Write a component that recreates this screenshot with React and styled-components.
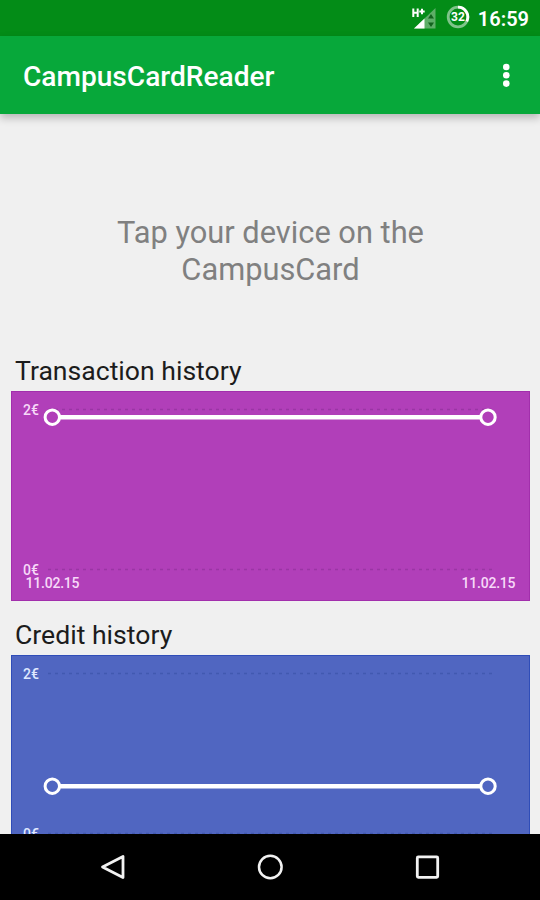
import styled, { createGlobalStyle } from "styled-components";

const GlobalStyle = createGlobalStyle`
  * {
    box-sizing: border-box;
  }

  body {
    margin: 0;
    background: #f0f0f0;
    font-family: Roboto, sans-serif;
  }
`;

const Screen = styled.div`
  display: flex;
  flex-direction: column;
  width: 540px;
  height: 900px;
  overflow: hidden;
  background: #f0f0f0;
`;

const StatusBar = styled.div`
  display: flex;
  flex: none;
  align-items: center;
  justify-content: flex-end;
  height: 36px;
  padding-right: 11px;
  background: #038c17;
`;

const SignalIcon = styled.svg`
  margin-right: 10px;
`;

const BatteryIcon = styled.svg`
  margin: 0 7.5px 2px 0;
`;

const Clock = styled.span`
  padding-top: 2px;
  font-size: 20px;
  font-weight: 600;
  line-height: 24px;
  color: #ffffff;
`;

const Header = styled.header`
  display: flex;
  flex: none;
  align-items: center;
  justify-content: space-between;
  height: 78px;
  padding: 3px 22px 0 23px;
  background: #07a83a;
  box-shadow: 0 4px 8px rgba(0, 0, 0, 0.24);
`;

const AppName = styled.h1`
  margin: 0;
  font-size: 28.1px;
  font-weight: 500;
  line-height: 32px;
  color: #ffffff;
`;

const MenuButton = styled.button`
  display: flex;
  padding: 0;
  border: 0;
  background: none;
`;

const Content = styled.main`
  flex: 1;
  min-height: 0;
  padding: 0 10px 0 11px;
  overflow: hidden;
`;

const Hint = styled.p`
  width: 330px;
  height: 235px;
  margin: 0 auto;
  padding-top: 100px;
  font-size: 30.8px;
  line-height: 37px;
  text-align: center;
  color: #808080;
`;

const SectionTitle = styled.h2`
  height: ${({ $height }) => $height}px;
  margin: 0;
  padding: ${({ $top }) => $top}px 0 0 4px;
  font-size: 26.6px;
  font-weight: 400;
  line-height: 32px;
  color: #1c1c1c;
`;

const ChartBox = styled.svg`
  display: block;
  background: ${({ $color }) => $color};
  border: 1px solid ${({ $edge }) => $edge};
`;

const AxisLabel = styled.text`
  font-size: 14px;
  font-weight: 500;
  fill: ${({ $color }) => $color};
`;

const NavBar = styled.nav`
  display: flex;
  flex: none;
  align-items: center;
  justify-content: center;
  gap: 129px;
  height: 66.5px;
  background: #000000;
`;

function Chart({ color, edge, grid, label, valueY }) {
  return (
    <ChartBox
      $color={color}
      $edge={edge}
      width="519"
      height="210"
      viewBox="1 1 517 208"
    >
      <path
        d="M37 18.5H482M37 178.5H482"
        stroke={grid}
        strokeWidth="1.3"
        strokeDasharray="3 4"
      />
      <AxisLabel $color={label} x="12" y="23.5" textLength="16">
        2€
      </AxisLabel>
      <AxisLabel $color={label} x="12" y="183.5" textLength="16">
        0€
      </AxisLabel>
      <AxisLabel $color={label} x="14.5" y="196.5" textLength="54">
        11.02.15
      </AxisLabel>
      <AxisLabel $color={label} x="450.5" y="196.5" textLength="54">
        11.02.15
      </AxisLabel>
      <path d={`M41.5 ${valueY}H477`} stroke="#ffffff" strokeWidth="4.5" />
      <g fill={color} stroke="#ffffff" strokeWidth="3">
        <circle cx="41.3" cy={valueY} r="7.2" />
        <circle cx="477" cy={valueY} r="7.2" />
      </g>
    </ChartBox>
  );
}

export default function App() {
  return (
    <>
      <GlobalStyle />
      <Screen>
        <StatusBar>
          <SignalIcon width="25" height="24" viewBox="412 6 25 24">
            <path d="M436.5 8V28.5H415z" fill="#5eae68" />
            <path d="M425.5 18.5V28.5H415z" fill="#ffffff" />
            <path
              d="M429 18.5l3-4.5 3 4.5zM429 22.5l3 4.5 3-4.5z"
              fill="#12631e"
            />
            <path
              d="M414.3 8.5V17M418.7 8.5V17M414.3 12.7H418.7M420.3 11.5H425.7M423 8.8V14.2"
              stroke="#ffffff"
              strokeWidth="2"
            />
          </SignalIcon>
          <BatteryIcon width="24" height="24" viewBox="0 0 24 24">
            <g fill="none" strokeWidth="2.8">
              <circle cx="12" cy="12" r="9.8" stroke="#7fc48a" />
              <path
                d="M12 2.2A9.8 9.8 0 0 1 20.8 16.3"
                stroke="#ffffff"
              />
            </g>
            <text
              x="12"
              y="16.2"
              fill="#ffffff"
              fontSize="12"
              fontWeight="700"
              textAnchor="middle"
            >
              32
            </text>
          </BatteryIcon>
          <Clock>16:59</Clock>
        </StatusBar>
        <Header>
          <AppName>CampusCardReader</AppName>
          <MenuButton aria-label="More options">
            <svg width="24" height="28" viewBox="0 0 24 28" fill="#ffffff">
              <circle cx="12.3" cy="4" r="3.3" />
              <circle cx="12.3" cy="12.3" r="3.3" />
              <circle cx="12.3" cy="20.6" r="3.3" />
            </svg>
          </MenuButton>
        </Header>
        <Content>
          <Hint>Tap your device on the CampusCard</Hint>
          <SectionTitle $height={41.5} $top={5.5}>
            Transaction history
          </SectionTitle>
          <Chart
            color="#b13fb9"
            edge="#a22fac"
            grid="#9a35a5"
            label="#f7d9f8"
            valueY={26.2}
          />
          <SectionTitle $height={54} $top={18.5}>
            Credit history
          </SectionTitle>
          <Chart
            color="#5066c1"
            edge="#2f4db8"
            grid="#4159b0"
            label="#dfe8ff"
            valueY={131.2}
          />
        </Content>
        <NavBar>
          <svg width="28" height="30" viewBox="0 0 28 30">
            <path
              d="M24 4.5V25.5L3.5 15z"
              fill="none"
              stroke="#f2f2f2"
              strokeWidth="2.8"
              strokeLinejoin="round"
            />
          </svg>
          <svg width="28" height="30" viewBox="0 0 28 30">
            <circle
              cx="14.3"
              cy="15"
              r="11.3"
              fill="none"
              stroke="#f2f2f2"
              strokeWidth="2.5"
            />
          </svg>
          <svg width="28" height="30" viewBox="0 0 28 30">
            <rect
              x="4.3"
              y="4.9"
              width="20.4"
              height="20.4"
              rx="1"
              fill="none"
              stroke="#f2f2f2"
              strokeWidth="2.8"
            />
          </svg>
        </NavBar>
      </Screen>
    </>
  );
}
